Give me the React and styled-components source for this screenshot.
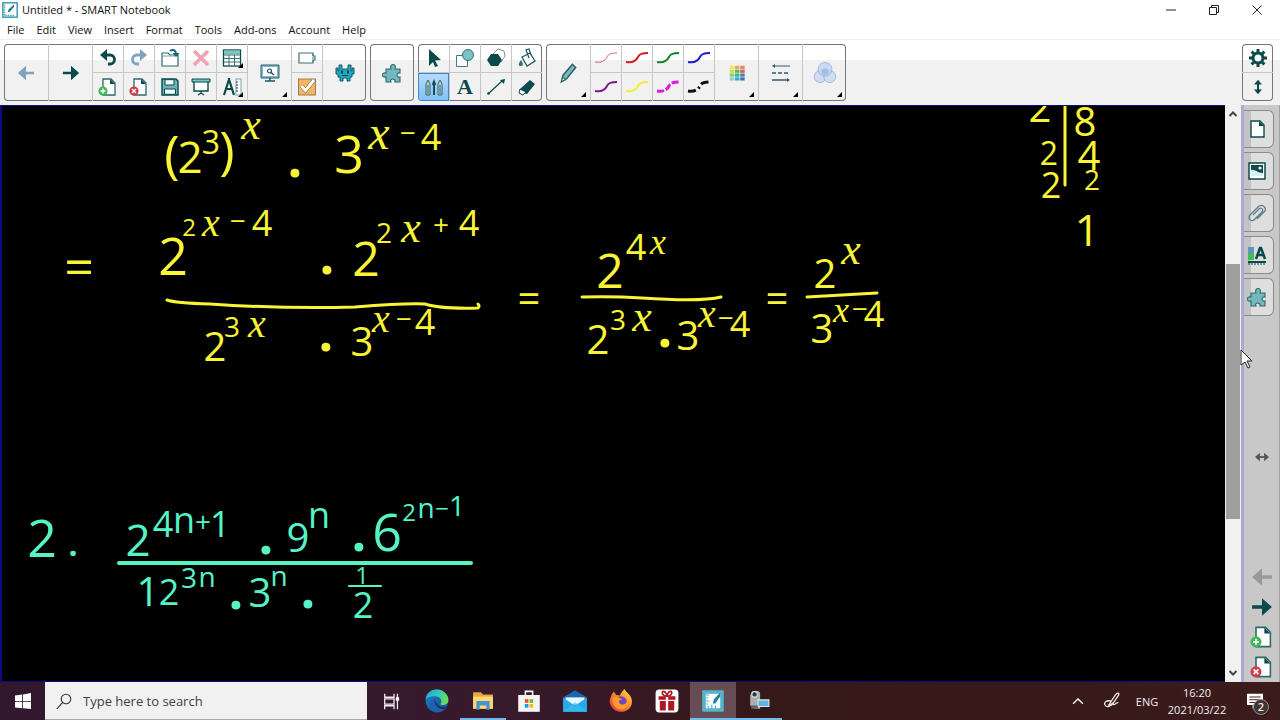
import React from "react";
import styled, { createGlobalStyle, css } from "styled-components";

const TEAL = "#0b4a4a";
const MINT = "#7cc3c3";
const YELLOW = "#f8f436";
const GREEN = "#55f3c6";

const GlobalStyle = createGlobalStyle`
  *, *::before, *::after { box-sizing: border-box; }
  body { margin: 0; font-family: "Open Sans", "Noto Sans", sans-serif; background: #000; }
  button { font: inherit; color: inherit; padding: 0; margin: 0; border: 0; background: none; }
  svg { display: block; flex: none; }
`;

const Window = styled.div`
  display: flex;
  flex-direction: column;
  height: 100vh;
  overflow: hidden;
`;

/* ---------- title bar and menu ---------- */
const TitleBar = styled.header`
  display: flex;
  align-items: center;
  height: 20px;
  padding: 0 2px;
  background: #fff;
`;
const Title = styled.h1`
  flex: 1;
  margin: 0 0 0 4px;
  font-size: 11px;
  line-height: 20px;
  font-weight: 400;
  color: #111;
`;
const WindowButton = styled.button`
  display: flex;
  align-items: center;
  justify-content: center;
  width: 43px;
  height: 20px;
`;
const MenuBar = styled.nav`
  display: flex;
  gap: 12px;
  height: 20px;
  padding: 0 7px;
  background: #fff;
  border-bottom: 1px solid #ededed;
`;
const MenuItem = styled.button`
  font-size: 11px;
  line-height: 20px;
  color: #111;
`;

/* ---------- toolbar ---------- */
const Toolbar = styled.div`
  display: flex;
  gap: 4px;
  height: 65px;
  padding: 4px 7px 4px 4px;
  background: linear-gradient(#fff 20px, #f1f1f1 20px);
`;
const ToolGroup = styled.div`
  display: flex;
  height: 57px;
  border-radius: 4px;
  box-shadow: inset 0 0 0 1px #767676;
  overflow: hidden;
  margin-left: ${(p) => (p.$end ? "auto" : "0")};
  & > * + * { border-left: 1px solid #c6c6c6; }
`;
const ToolPair = styled.div`
  display: flex;
  flex-direction: column;
  width: 31px;
  & > * + * { border-top: 1px solid #c6c6c6; }
`;
const ToolButton = styled.button`
  position: relative;
  display: flex;
  flex: 1;
  align-items: center;
  justify-content: center;
  ${(p) => p.$wide && css`flex: none; width: 44px;`}
  ${(p) => p.$active && css`
    background: linear-gradient(#b5dcfb, #7fc0f7);
    box-shadow: inset 0 0 0 1px #3d88bd;
  `}
  ${(p) => p.$menu && css`
    &::after {
      content: "";
      position: absolute;
      right: 4px;
      bottom: 4px;
      border-style: solid;
      border-width: 0 0 5px 5px;
      border-color: transparent transparent #000 transparent;
    }
  `}
`;

/* ---------- workspace ---------- */
const Workspace = styled.main`
  display: flex;
  flex: 1;
  min-height: 0;
`;
const Canvas = styled.section`
  position: relative;
  flex: 1;
  overflow: hidden;
  background: #000;
  border: solid #0c0c80;
  border-width: 1px 0 1px 2px;
`;
const Ink = styled.svg`
  position: absolute;
  left: 0;
  top: 0;
  overflow: visible;
  fill: none;
  stroke-linecap: round;
  stroke-linejoin: round;
  text {
    font-family: "Open Sans", "Noto Sans", sans-serif;
    font-weight: 400;
    text-anchor: middle;
    stroke: none;
  }
  .variable { font-family: "Liberation Serif", serif; font-style: italic; }
  .dot { font-weight: 700; }
`;
const ScrollBar = styled.div`
  display: flex;
  flex-direction: column;
  width: 16px;
  padding: 1px 0;
  background: #f1f1f1;
`;
const ScrollButton = styled.button`
  display: flex;
  align-items: center;
  justify-content: center;
  height: 16px;
`;
const ScrollTrack = styled.div`
  display: flex;
  flex-direction: column;
  flex: 1;
`;
const Space = styled.div`
  flex: ${(p) => p.$grow} 0 0;
`;
const ScrollThumb = styled.div`
  flex: 255 0 0;
  margin: 0 1px;
  background: #9f9f9f;
`;
const SidePanel = styled.aside`
  position: relative;
  display: flex;
  flex-direction: column;
  width: 39px;
  padding-top: 5px;
  background: #c8c8c8;
  border-left: 3px solid #a9a9d2;
  border-right: 1px solid #a2a2a2;
`;
const SideTabs = styled.div`
  display: flex;
  flex-direction: column;
  gap: 4px;
`;
const SideTab = styled.button`
  display: flex;
  align-items: center;
  justify-content: center;
  width: 30px;
  height: 38px;
  padding-right: 3px;
  border: 1px solid #8b8b8b;
  border-left: 0;
  border-radius: 0 6px 6px 0;
  background: linear-gradient(90deg, #c3c3c3 7px, #dedede 7px);
`;
const PanelResize = styled.button`
  display: flex;
  align-items: center;
  justify-content: center;
  height: 26px;
  margin: auto 0 92px;
`;
const PageButton = styled.button`
  display: flex;
  align-items: center;
  justify-content: center;
  height: 30px;
`;
const Pointer = styled.svg`
  position: absolute;
  left: -4px;
  top: 244px;
`;

/* ---------- taskbar ---------- */
const Taskbar = styled.footer`
  display: flex;
  height: 38px;
  background: linear-gradient(90deg, #32182f, #371a2c 40%, #351818 60%, #3b1b1b);
  color: #f3eded;
`;
const TaskButton = styled.button`
  display: flex;
  align-items: center;
  justify-content: center;
  width: ${(p) => p.$width || 46}px;
  background: ${(p) => (p.$active ? "#654c55" : "none")};
  ${(p) => p.$open && css`box-shadow: inset 0 -2px 0 #76b9ed;`}
`;
const SearchBox = styled.label`
  display: flex;
  align-items: center;
  gap: 11px;
  width: 322px;
  padding-left: 11px;
  background: #f1f1f1;
  border-bottom: 1px solid #aaa;
`;
const SearchInput = styled.input`
  flex: 1;
  min-width: 0;
  padding: 0;
  border: 0;
  outline: 0;
  background: none;
  font: 13px/20px "Open Sans", sans-serif;
  &::placeholder { color: #3b4348; opacity: 1; }
`;
const Apps = styled.div`
  display: flex;
  flex: 1;
  padding-left: 1px;
`;
const Tray = styled.div`
  display: flex;
  align-items: stretch;
`;
const TrayButton = styled.button`
  display: flex;
  align-items: center;
  justify-content: center;
  width: ${(p) => p.$width}px;
  font-size: 11px;
  line-height: 17px;
  text-align: center;
`;

/* ---------- icons ---------- */
const Icon = ({ s = 20, children, ...rest }) => (
  <svg width={s} height={s} viewBox="0 0 20 20" fill="none" aria-hidden="true" {...rest}>{children}</svg>
);

const Arrow = ({ color, flip, s = 18 }) => (
  <Icon s={s}><path transform={flip ? "matrix(-1 0 0 1 20 0)" : undefined} fill={color} d="M1 8.500h9V2l9 8-9 8v-6.500H1z" /></Icon>
);
const NotebookLogo = ({ s = 16 }) => (
  <Icon s={s}>
    <rect x="1" y="1" width="18" height="18" fill="#fff" stroke="#4aa3b7" strokeWidth="2" />
    <path d="M3 3v14h13" stroke="#55adc0" strokeWidth="2" strokeDasharray="2 1" />
    <path d="m7 13 1.500-4L15 3v3l-5 6z" fill="#17798e" />
  </Icon>
);
const Undo = ({ color, flip }) => (
  <Icon><g transform={flip ? "matrix(-1 0 0 1 20 0)" : undefined}>
    <path d="M6 7h6a4.500 4.500 0 0 1 0 9h-2" stroke={color} strokeWidth="2.800" />
    <path d="M2 7l7-6v12z" fill={color} />
  </g></Icon>
);
const PageShape = () => (
  <><path d="M5 2h8l4 4v12H5z" fill="#fff" stroke="#2d6868" strokeWidth="1.300" /><path d="M12 2v5h5z" fill={TEAL} /></>
);
const AddPage = ({ s }) => (
  <Icon s={s}><PageShape /><circle cx="5" cy="14" r="4.600" fill="#43b85a" /><path d="M5 11.500v5M2.500 14h5" stroke="#fff" strokeWidth="1.400" /></Icon>
);
const DeletePage = ({ s }) => (
  <Icon s={s}><PageShape /><circle cx="5" cy="14" r="4.600" fill="#cf3b47" /><path d="m3 12 4 4m0-4-4 4" stroke="#fff" strokeWidth="1.400" /></Icon>
);
const OpenFile = () => (
  <Icon><path d="M2 5h6l2 2h8v11H2z" fill="#fff" stroke="#2d6868" strokeWidth="1.200" /><path d="M3 8h14" stroke="#7aa" /><path d="M10 3c3-2 6-1 6 3" stroke="#1a6275" strokeWidth="2" /><path d="M12.500 5h7L16 9z" fill="#1a6275" /></Icon>
);
const Cross = () => <Icon><path d="m3 3 14 14m0-14L3 17" stroke="#efa3b7" strokeWidth="3.600" /></Icon>;
const TableIcon = () => (
  <Icon><rect x="1.500" y="2" width="17" height="16" fill="#fff" stroke={TEAL} strokeWidth="1.300" /><path d="M2 2.600h16v4H2z" fill={MINT} /><path d="M2 7h16M2 10.500h16M2 14h16M7 7v11M12.500 7v11" stroke="#3b7474" /></Icon>
);
const Save = () => (
  <Icon><path d="M2 2h14l2 2v14H2z" fill="#6bb5ba" stroke={TEAL} strokeWidth="1.400" /><path d="M5 2.700h9V8H5zM4.500 12h11v5.300h-11z" fill="#f4ffff" stroke={TEAL} /></Icon>
);
const Screen = () => (
  <Icon><path d="M3 4v10h14V4" fill="#fff" stroke={TEAL} strokeWidth="1.400" /><path d="M1 2h18v3H1z" fill={MINT} stroke={TEAL} /><path d="M10 14v3m-3 1 3-2 3 2" stroke={TEAL} strokeWidth="1.300" /></Icon>
);
const Measure = () => (
  <Icon><path d="M7 1v4M2 18 6.500 4h1L12 18M4 12h6" stroke={TEAL} strokeWidth="2.200" /><rect x="14" y="2" width="5" height="16" fill="#fff" stroke="#7ca4aa" /><path d="M14 5h2m-2 3h2m-2 3h2m-2 3h2" stroke={TEAL} /></Icon>
);
const Monitor = () => (
  <Icon><path d="M1 2h18v13H1z" fill="#7fb6c5" stroke="#315f72" /><path d="M3 4h14v9H3z" fill="#fff" /><circle cx="9.500" cy="8" r="2" stroke="#205265" strokeWidth="1.200" /><path d="m11 9.500 3 2.500M10 15v3M5 18h10" stroke="#205265" strokeWidth="1.500" /></Icon>
);
const ResponseTag = () => (
  <Icon><path d="M2 5h14v3h2v4h-2v3H2z" fill="#fff" stroke="#3b7474" strokeWidth="1.200" /><path d="M16 6v8" stroke="#3b7474" strokeDasharray="2 1" /></Icon>
);
const Check = () => (
  <Icon><rect x="1.500" y="2" width="17" height="16" fill="#f6b45e" stroke="#9a7f52" /><path d="m4.500 9 4 4.500L17 3" stroke="#79603b" strokeWidth="4" /><path d="m4.500 9 4 4.500L17 3" stroke="#fff" strokeWidth="3" /></Icon>
);
const Monster = () => (
  <Icon><path d="M4 2h3v4h6V2h3v6h1V5h2v6h-2v3h-2v4h-3v-3H8v3H5v-4H3v-3H1V5h2v3h1z" fill="#22a9bd" stroke="#12596a" /><path d="M6 7.500h2v3H6zM12 7.500h2v3h-2z" fill="#123e50" /><path d="M7 12.500h6" stroke="#123e50" /></Icon>
);
const Puzzle = ({ s = 20 }) => (
  <Icon s={s}><path d="M4 6h5c-2-6 6-6 4 0h5v4c-4-1-4 5 0 4v5h-5c1-4-6-4-4 0H4v-5c-5 1-5-5 0-4z" fill="#73b9bb" stroke="#2e696f" strokeWidth="1.100" /></Icon>
);
const Select = () => <Icon><path d="m5 1 12 11-6 .500L14 18l-3 1-2-5-4 4z" fill={TEAL} /></Icon>;
const Shapes = () => <Icon><path d="M1.500 7.500h11v11h-11z" fill="#fff" stroke="#41797c" /><circle cx="13" cy="7" r="5.500" fill={MINT} stroke="#346f77" /></Icon>;
const Polygons = () => <Icon><path d="m7 6 5-5 6 2 1 5-4 6z" fill="#fff" stroke="#7b9292" /><path d="M5 6h7l4 6-4 6H5l-4-6z" fill={TEAL} /></Icon>;
const Fill = () => <Icon><path d="m5 9 8-4 5 8-8 5z" fill="#fff" stroke="#215c61" strokeWidth="1.300" /><path d="m12 10-3-8 3-1 2 6" stroke="#215c61" strokeWidth="1.300" /><path d="M4 12c-3 4-3 6 0 6s2-3 0-6z" fill="#31757a" /></Icon>;
const Pens = () => <Icon><path d="M2 18V7l2-4 2 4v11zM14 18V7l2-4 2 4v11z" fill="#b5d3d2" stroke="#39636c" /><path d="M9 18V9L8 7l2-5 2 5-1 2v9z" fill="#164c56" /><path d="M4 8v9m12-9v9" stroke="#39636c" /></Icon>;
const LetterIcon = styled.span`
  font: 700 22px/24px "Liberation Serif", serif;
  color: ${TEAL};
`;
const LineTool = () => <Icon><path d="M2 17 16 4" stroke={TEAL} strokeWidth="1.200" /><circle cx="2.500" cy="16.500" r="1.300" fill={TEAL} /><path d="m14 3 5-1-1 5z" fill={TEAL} /></Icon>;
const Eraser = () => <Icon><path d="m3 12 10-9 5 4-8 10-5-1z" fill={TEAL} /><path d="m3 12 6 3-3 3-4-2z" fill="#fff" stroke={TEAL} /></Icon>;
const Pencil = () => <Icon s={22}><path d="m4 18 1.500-6L14 2l3 3-8 10z" fill="#79b6bd" stroke="#315f68" strokeWidth="1.300" /><path d="m4 18 1-4 3 2z" fill="#f6fafa" stroke="#315f68" /></Icon>;
const PenLine = ({ color, thin, dash }) => (
  <svg width="24" height="18" viewBox="0 0 24 18" fill="none" aria-hidden="true"><path d="M1 13c6 1 10-1 12-5 1-3 5-4 10-4" stroke={color} strokeWidth={thin ? 1 : dash ? 3 : 2} strokeDasharray={dash} /></svg>
);
const palette = ["#f6e947", "#f0a45c", "#e88472", "#c4e04a", "#51b95b", "#d66052", "#8dce64", "#39b879", "#477fb6", "#8ecde0", "#3ba6d3", "#3876b4"];
const Palette = () => <Icon s={16}>{palette.map((c, i) => <rect key={i} x={1 + (i % 3) * 6.5} y={1 + Math.floor(i / 3) * 4.8} width="5.600" height="4" fill={c} />)}</Icon>;
const LineStyles = () => <Icon><path d="M3 3h16" stroke="#315b70" /><path d="M1 10h18" stroke="#315b70" strokeDasharray="4 2" strokeWidth="1.300" /><path d="M1 17h16" stroke="#315b70" strokeWidth="1.500" /><path d="m1 3 3-2v4zm18 14-3-2v4z" fill="#315b70" /></Icon>;
const Blend = () => <Icon s={24}><g stroke="#8fa9d1" strokeWidth=".600"><circle cx="6" cy="13" r="5" fill="#d0def4" /><circle cx="14" cy="13" r="5" fill="#d0def4" /><circle cx="10" cy="7" r="5.800" fill="#c3d6f3" fillOpacity=".800" /></g><circle cx="10" cy="9" r="3" fill="#7c9dd6" fillOpacity=".450" /></Icon>;
const Gear = () => <Icon><circle cx="10" cy="10" r="5" stroke={TEAL} strokeWidth="3" /><path d="M10 1v3m0 12v3M1 10h3m12 0h3M3.600 3.600l2.200 2.200m8.400 8.400 2.200 2.200m0-12.800-2.200 2.200m-8.400 8.400-2.200 2.200" stroke={TEAL} strokeWidth="3" /></Icon>;
const UpDown = () => <Icon s={16}><path d="M10 5v10" stroke={TEAL} strokeWidth="2.500" /><path d="m10 1 5 6H5zm0 18 5-6H5z" fill={TEAL} /></Icon>;
const BlankPage = () => <Icon><path d="M4 2h9l4 4v12H4z" fill="#fff" stroke={TEAL} strokeWidth="1.400" /><path d="M12 2v5h5z" fill={TEAL} /></Icon>;
const Picture = () => <Icon><path d="M2 2h16v16H2z" fill="#fff" stroke={TEAL} strokeWidth="1.500" /><path d="M4 4h12v10H4z" fill={TEAL} /><path d="M4 9c4-1 6 3 12 3v3H4z" fill="#d7eff2" /><circle cx="13" cy="7" r="1.600" fill="#fff" /></Icon>;
const Clip = () => <Icon><path d="m6 12 6-6c2-2 5 0 3 3l-7 7c-3 4-8 0-5-4l8-8c4-4 10 1 6 5l-7 7" stroke="#617e91" strokeWidth="1.300" /></Icon>;
const TextStyle = () => <Icon><path d="M1 2h6v7H1z" fill="#6495b8" /><path d="M1 9h6v6H1z" fill="#43be4d" /><path d="m9 14 4-11h1l4 11m-8-4h7" stroke={TEAL} strokeWidth="2.600" /><path d="M1 17h18" stroke={TEAL} strokeWidth="2" /><path d="M1 19h18" stroke={TEAL} strokeDasharray="2 1" /></Icon>;
const LeftRight = () => <Icon s={14}><path d="M4 10h12" stroke="#555" strokeWidth="2.500" /><path d="m0 10 7-6v12zm20 0-7-6v12z" fill="#555" /></Icon>;
const Chevron = ({ down, color = "#444", s = 10 }) => <Icon s={s}><path d={down ? "m3 6 7 7 7-7" : "m3 14 7-7 7 7"} stroke={color} strokeWidth={s > 10 ? 2 : 4} /></Icon>;

const WindowsLogo = () => <Icon s={16}><path d="m0 3 9-1v8H0zm10-1 10-2v10H10zM0 11h9v8l-9-1zm10 0h10v9l-10-1z" fill="#fff" /></Icon>;
const SearchIcon = () => <Icon s={16}><circle cx="12.500" cy="7.500" r="6" stroke="#333" strokeWidth="1.400" /><path d="m8 12-7 8" stroke="#333" strokeWidth="1.400" /></Icon>;
const TaskView = () => <Icon s={17}><path d="M2 1v4h11V1M2 19v-4h11v4M2 7h11v6H2zM17 1v18" stroke="#f3eaf0" strokeWidth="1.500" /><path d="M15 5h4v4h-4z" fill="#fff" /></Icon>;
const Edge = () => (
  <Icon s={24}>
    <defs>
      <linearGradient id="edgeTop" x1="0" y1="0" x2="1" y2=".500"><stop stopColor="#279bdc" /><stop offset=".500" stopColor="#30c5c2" /><stop offset="1" stopColor="#66df56" /></linearGradient>
      <linearGradient id="edgeBase" x1="0" y1="0" x2="1" y2="1"><stop stopColor="#1c83d0" /><stop offset="1" stopColor="#124a93" /></linearGradient>
    </defs>
    <circle cx="10" cy="10" r="9.500" fill="url(#edgeBase)" />
    <path d="M.500 9C1 3 5 .500 10 .500c6 0 10 5 9.500 9.500-.500 3-4 4-7 3 3-3 0-7-4-7-4 0-7 1-8 3z" fill="url(#edgeTop)" />
    <path d="M8 8c-3 4 1 9 6 9 2 0 3-1 4-2-2 .500-5 .500-7-1.500S8.500 10 8 8z" fill="#321a30" fillOpacity=".750" />
    <path d="M8 7c-4 2-4 9 1 12 3 .500 6-.500 8-2.500-5 1.500-10-3-9-9.500z" fill="#1b63b0" />
  </Icon>
);
const Folder = () => <Icon s={22}><path d="M1 2h7l2 2h9v13H1z" fill="#e5a93c" /><path d="M1 6h18v11H1z" fill="#ffd875" /><path d="M4 10h12v8h-3v-4H7v4H4z" fill="#4296cf" /></Icon>;
const Store = () => <Icon s={24}><path d="M7 6V2h6v4" stroke="#fff" strokeWidth="1.300" /><path d="M1 5h18v14H1z" fill="#f4f4f4" /><path d="M6.500 8.500h3v3h-3z" fill="#f25022" /><path d="M10.500 8.500h3v3h-3z" fill="#7fba00" /><path d="M6.500 12.500h3v3h-3z" fill="#00a4ef" /><path d="M10.500 12.500h3v3h-3z" fill="#ffb900" /></Icon>;
const Mail = () => <Icon s={24}><path d="m0 7 10-6 10 6v12H0z" fill="#1769ae" /><path d="M2 7h16v6H2z" fill="#e7f7ff" /><path d="m0 7 10 7 10-7v12H0z" fill="#28a9e7" /><path d="m0 19 10-8 3 2 7 6z" fill="#3dc3f3" fillOpacity=".600" /></Icon>;
const Firefox = () => <Icon s={24}><defs><linearGradient id="fox" x1="1" y1="0" x2="0" y2="1"><stop stopColor="#ffeb3d" /><stop offset=".450" stopColor="#ff8b29" /><stop offset="1" stopColor="#ed2454" /></linearGradient></defs><path d="M2 5 4 2l2 3 3 .500C10 3 12 1 13 0c1 3 5 4 6 9 1 6-4 10-9 10S-1 14 1 8z" fill="url(#fox)" /><circle cx="10" cy="11" r="5" fill="#7547b8" /><path d="M3 7c3-1 6 0 8 2-4-1-3 4 0 4s4-2 4-4c2 4 0 8-5 8-4 0-8-4-7-10z" fill="#ff9c2c" /></Icon>;
const Gift = () => <Icon s={24}><rect x=".500" y=".500" width="19" height="19" rx="3" fill="#fff" /><path d="M3 6h6v3H3zm8 0h6v3h-6zM4 10h5v8H4zm7 0h5v8h-5z" fill="#ad1721" /><path d="M10 6C6 6 5 2 7 2s3 3 3 4c0-1 1-4 3-4s1 4-3 4z" stroke="#ad1721" strokeWidth="1.300" /></Icon>;
const NotebookApp = () => <Icon s={24}><rect x="1" y="1" width="18" height="18" rx="1" fill="#55b4cc" /><path d="M4 4h12v12H4z" fill="#fff" /><path d="M4 5h3M4 7.500h2M4 10h3M4 12.500h2M6 16v-2m3 2v-3m3 3v-2" stroke="#55b4cc" /><path d="m10 12 .500-3L16 3v3l-4 6z" fill="#247f99" /></Icon>;
const Recorder = () => <Icon s={22}><path d="M3 3c0-3 8-3 8 0v14H6l-4-3V5z" fill="#a9b0b3" /><circle cx="6" cy="4" r="2.500" fill="#30383d" stroke="#d7dcde" /><path d="M9 9h10v6H9z" fill="#62b6dc" stroke="#dce6eb" /><path d="M3 14h6v3H3z" fill="#60686c" /></Icon>;
const Ribbon = () => <Icon s={18}><path d="m6 15 8-12c2-3 5-2 3 1l-6 9c-2 3-5 2-3-1l1-2c-5-1-8 1-7 4s5 3 7 0 2-1 3 0 3-3 5-2" stroke="#f5ecec" strokeWidth="1.400" /></Icon>;
const NoticeWrap = styled.span`
  position: relative;
  display: block;
`;
const NoticeBadge = styled.span`
  position: absolute;
  left: 6px;
  top: 6px;
  width: 16px;
  height: 16px;
  border: 1px solid #9b8c8c;
  border-radius: 50%;
  background: #403334;
  font-size: 11px;
  line-height: 14px;
  font-weight: 600;
`;
const Notice = () => <Icon s={16}><path d="M0 1h20v14h-9l-4 5v-5H0z" fill="#fff" /><path d="M3 5h14M3 8.500h14M3 12h8" stroke="#442525" strokeWidth="1.300" /></Icon>;

/* ---------- page contents: each mark is [centre x, baseline, size, character] ---------- */
const yellowMarks = [
  [172, 173, 52, "("], [190, 173, 44, "2"], [211, 154, 32, "3"], [227, 169, 52, ")"], [251, 139, 44, "x"],
  [295, 177, 52, "."], [349, 173, 52, "3"], [379, 149, 48, "x"], [408, 143, 28, "−"], [431, 150, 36, "4"],
  [79, 285, 52, "="], [173, 275, 52, "2"], [189, 236, 24, "2"], [211, 236, 40, "x"], [238, 231, 28, "−"], [262, 236, 36, "4"],
  [327, 274, 52, "."], [366, 276, 48, "2"], [384, 243, 28, "2"], [411, 242, 44, "x"], [441, 235, 28, "+"], [469, 236, 36, "4"],
  [215, 361, 40, "2"], [232, 337, 28, "3"], [257, 337, 40, "x"], [326, 351, 52, "."], [362, 356, 40, "3"],
  [381, 332, 40, "x"], [404, 329, 28, "−"], [425, 335, 36, "4"],
  [529, 313, 40, "="], [610, 288, 48, "2"], [636, 260, 36, "4"], [658, 254, 36, "x"],
  [598, 354, 40, "2"], [618, 330, 28, "3"], [642, 331, 44, "x"], [665, 347, 52, "."], [688, 350, 40, "3"],
  [707, 327, 40, "x"], [726, 328, 28, "−"], [740, 337, 36, "4"], [777, 313, 40, "="],
  [825, 288, 40, "2"], [851, 264, 44, "x"], [822, 343, 40, "3"], [841, 322, 36, "x"], [860, 319, 28, "−"], [874, 327, 36, "4"],
  [1040, 122, 40, "2"], [1085, 136, 40, "8"], [1049, 165, 32, "2"], [1089, 170, 40, "4"],
  [1051, 198, 36, "2"], [1092, 190, 28, "2"], [1087, 246, 44, "1"],
];
const greenMarks = [
  [42, 557, 52, "2"], [73, 556, 32, "."], [138, 556, 44, "2"], [163, 537, 36, "4"], [184, 533, 36, "n"], [203, 532, 28, "+"], [220, 537, 36, "1"],
  [266, 554, 52, "."], [298, 552, 40, "9"], [319, 528, 36, "n"], [359, 551, 52, "."], [387, 551, 52, "6"],
  [409, 521, 24, "2"], [426, 518, 28, "n"], [442, 517, 24, "−"], [457, 516, 28, "1"],
  [148, 606, 40, "1"], [169, 605, 36, "2"], [189, 588, 28, "3"], [207, 587, 28, "n"], [236, 609, 52, "."],
  [260, 607, 40, "3"], [279, 586, 28, "n"], [308, 608, 52, "."], [362, 584, 24, "1"], [363, 618, 36, "2"],
];
const markClass = { x: "variable", ".": "dot" };
const Marks = ({ marks }) => marks.map(([x, y, size, char], i) => (
  <text key={i} x={x} y={y} fontSize={size} className={markClass[char]}>{char}</text>
));

const menus = ["File", "Edit", "View", "Insert", "Format", "Tools", "Add-ons", "Account", "Help"];

const Tool = ({ label, children, wide, menu, active }) => (
  <ToolButton type="button" aria-label={label} title={label} $wide={wide} $menu={menu} $active={active}>{children}</ToolButton>
);

export default function App() {
  return (
    <Window>
      <GlobalStyle />
      <TitleBar>
        <NotebookLogo />
        <Title>Untitled * - SMART Notebook</Title>
        <WindowButton type="button" aria-label="Minimize"><Icon s={10}><path d="M0 10h20" stroke="#222" strokeWidth="2" /></Icon></WindowButton>
        <WindowButton type="button" aria-label="Restore"><Icon s={10}><path d="M1 5h14v14H1zM5 5V1h14v14h-4" stroke="#222" strokeWidth="2" /></Icon></WindowButton>
        <WindowButton type="button" aria-label="Close"><Icon s={10}><path d="m1 1 18 18m0-18L1 19" stroke="#222" strokeWidth="2" /></Icon></WindowButton>
      </TitleBar>
      <MenuBar aria-label="Main menu">{menus.map((m) => <MenuItem type="button" key={m}>{m}</MenuItem>)}</MenuBar>

      <Toolbar role="toolbar" aria-label="Tools">
        <ToolGroup>
          <Tool wide label="Previous page"><Arrow flip color="#82a3bf" /></Tool>
          <Tool wide label="Next page"><Arrow color={TEAL} /></Tool>
          <ToolPair><Tool label="Undo"><Undo color={TEAL} /></Tool><Tool label="Add page"><AddPage /></Tool></ToolPair>
          <ToolPair><Tool label="Redo"><Undo flip color="#82a3bf" /></Tool><Tool label="Delete page"><DeletePage /></Tool></ToolPair>
          <ToolPair><Tool label="Open"><OpenFile /></Tool><Tool label="Save"><Save /></Tool></ToolPair>
          <ToolPair><Tool label="Delete"><Cross /></Tool><Tool label="Screen shade"><Screen /></Tool></ToolPair>
          <ToolPair><Tool menu label="Table"><TableIcon /></Tool><Tool menu label="Measurement tools"><Measure /></Tool></ToolPair>
          <Tool wide menu label="View screens"><Monitor /></Tool>
          <ToolPair><Tool label="Response"><ResponseTag /></Tool><Tool label="Assessment"><Check /></Tool></ToolPair>
          <Tool wide label="Activity builder"><Monster /></Tool>
        </ToolGroup>
        <ToolGroup><Tool wide label="Add-ons"><Puzzle /></Tool></ToolGroup>
        <ToolGroup>
          <ToolPair><Tool label="Select"><Select /></Tool><Tool active label="Pens"><Pens /></Tool></ToolPair>
          <ToolPair><Tool label="Shapes"><Shapes /></Tool><Tool label="Text"><LetterIcon>A</LetterIcon></Tool></ToolPair>
          <ToolPair><Tool label="Regular polygons"><Polygons /></Tool><Tool label="Lines"><LineTool /></Tool></ToolPair>
          <ToolPair><Tool label="Fill"><Fill /></Tool><Tool label="Eraser"><Eraser /></Tool></ToolPair>
        </ToolGroup>
        <ToolGroup>
          <Tool wide menu label="Pen types"><Pencil /></Tool>
          <ToolPair><Tool label="Thin red pen"><PenLine color="#d46464" thin /></Tool><Tool label="Purple pen"><PenLine color="#781b86" /></Tool></ToolPair>
          <ToolPair><Tool label="Red pen"><PenLine color="#d21b20" /></Tool><Tool label="Yellow pen"><PenLine color="#f4ef2b" /></Tool></ToolPair>
          <ToolPair><Tool label="Green pen"><PenLine color="#15852a" /></Tool><Tool label="Dashed magenta pen"><PenLine color="#e316e4" dash="7 2" /></Tool></ToolPair>
          <ToolPair><Tool label="Blue pen"><PenLine color="#181cd0" /></Tool><Tool label="Dashed black pen"><PenLine color="#111" dash="8 3 2 3" /></Tool></ToolPair>
          <Tool wide menu label="Color"><Palette /></Tool>
          <Tool wide menu label="Line style"><LineStyles /></Tool>
          <Tool wide menu label="Transparency"><Blend /></Tool>
        </ToolGroup>
        <ToolGroup $end>
          <ToolPair><Tool label="Settings"><Gear /></Tool><Tool label="Move toolbar"><UpDown /></Tool></ToolPair>
        </ToolGroup>
      </Toolbar>

      <Workspace>
        <Canvas aria-label="Notebook page">
          <Ink width="1223" height="575" viewBox="2 106 1223 575">
            <g fill={YELLOW} stroke={YELLOW} strokeWidth="3">
              <Marks marks={yellowMarks} />
              <path fill="none" d="M167 300q8 3 43 4q75 5 145 3q50-4 70-3 15 5 53 4 2-2 0-4M582 297q30-1 60 1 60 4 79-1M807 297l70-4M1065 106v79" />
            </g>
            <g fill={GREEN} stroke={GREEN} strokeWidth="2">
              <Marks marks={greenMarks} />
              <path strokeWidth="4" d="M119 563h352" />
              <path d="M349 586h32" />
            </g>
          </Ink>
        </Canvas>
        <ScrollBar>
          <ScrollButton type="button" aria-label="Scroll up"><Chevron /></ScrollButton>
          <ScrollTrack><Space $grow={142} /><ScrollThumb /><Space $grow={146} /></ScrollTrack>
          <ScrollButton type="button" aria-label="Scroll down"><Chevron down /></ScrollButton>
        </ScrollBar>
        <SidePanel>
          <SideTabs>
            <SideTab type="button" aria-label="Page sorter"><BlankPage /></SideTab>
            <SideTab type="button" aria-label="Gallery"><Picture /></SideTab>
            <SideTab type="button" aria-label="Attachments"><Clip /></SideTab>
            <SideTab type="button" aria-label="Properties"><TextStyle /></SideTab>
            <SideTab type="button" aria-label="Add-ons panel"><Puzzle /></SideTab>
          </SideTabs>
          <PanelResize type="button" aria-label="Resize panel"><LeftRight /></PanelResize>
          <PageButton type="button" aria-label="Previous"><Arrow flip s={22} color="#999" /></PageButton>
          <PageButton type="button" aria-label="Next"><Arrow s={22} color={TEAL} /></PageButton>
          <PageButton type="button" aria-label="Insert page"><AddPage s={24} /></PageButton>
          <PageButton type="button" aria-label="Remove page"><DeletePage s={24} /></PageButton>
          <Pointer width="13" height="20" viewBox="0 0 13 20" aria-hidden="true"><path d="M1 1v15l4-3 3 6 2-1-3-6h5z" fill="#fff" stroke="#222" /></Pointer>
        </SidePanel>
      </Workspace>

      <Taskbar>
        <TaskButton type="button" aria-label="Start" $width={45}><WindowsLogo /></TaskButton>
        <SearchBox><SearchIcon /><SearchInput type="search" aria-label="Search" placeholder="Type here to search" /></SearchBox>
        <Apps>
          <TaskButton type="button" aria-label="Task view"><TaskView /></TaskButton>
          <TaskButton type="button" aria-label="Edge"><Edge /></TaskButton>
          <TaskButton type="button" aria-label="File Explorer" $open><Folder /></TaskButton>
          <TaskButton type="button" aria-label="Store"><Store /></TaskButton>
          <TaskButton type="button" aria-label="Mail"><Mail /></TaskButton>
          <TaskButton type="button" aria-label="Firefox"><Firefox /></TaskButton>
          <TaskButton type="button" aria-label="Gifts"><Gift /></TaskButton>
          <TaskButton type="button" aria-label="SMART Notebook" $open $active><NotebookApp /></TaskButton>
          <TaskButton type="button" aria-label="Recorder" $open><Recorder /></TaskButton>
        </Apps>
        <Tray>
          <TrayButton type="button" aria-label="Show hidden icons" $width={32}><Chevron color="#fff" s={14} /></TrayButton>
          <TrayButton type="button" aria-label="Ink workspace" $width={36}><Ribbon /></TrayButton>
          <TrayButton type="button" $width={34}>ENG</TrayButton>
          <TrayButton type="button" $width={66}><time dateTime="2021-03-22T16:20">16:20<br />2021/03/22</time></TrayButton>
          <TrayButton type="button" aria-label="2 notifications" $width={50}><NoticeWrap><Notice /><NoticeBadge>2</NoticeBadge></NoticeWrap></TrayButton>
        </Tray>
      </Taskbar>
    </Window>
  );
}
